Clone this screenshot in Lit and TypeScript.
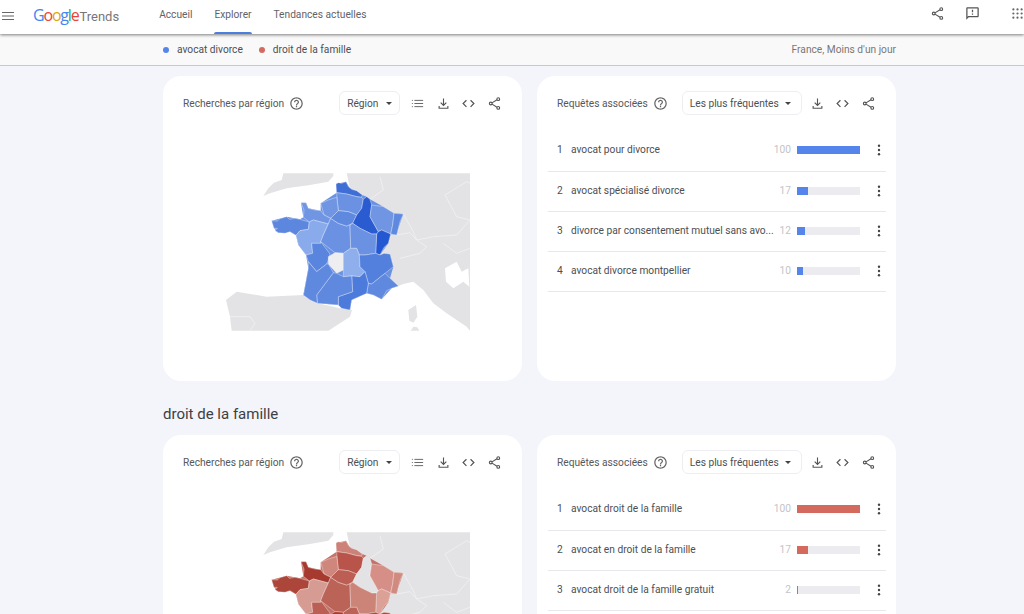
import { LitElement, html, css, svg } from "lit";
import { customElement } from "lit/decorators.js";

// region outlines, traced on a 870x570 canvas (3x the map size)
const REGIONS: Record<string, string> = {
  nord: "408,72 415,68 425,70 438,65 445,80 455,88 470,92 487,105 484,112 470,110 440,102 410,98",
  picardie: "410,98 440,102 470,110 484,112 490,118 485,145 470,165 445,155 415,152 412,125",
  hnormandie: "362,130 385,120 410,112 412,125 415,152 392,175 372,165 368,150",
  bnormandie: "303,128 318,128 325,145 345,150 362,152 372,165 392,175 385,192 340,180 328,186 310,172 312,150",
  bretagne: "215,182 232,183 240,176 260,170 268,178 285,175 300,178 328,186 325,208 300,212 288,226 270,215 255,220 235,218 225,212 232,205 222,205",
  loire: "288,226 300,212 325,208 328,186 340,180 385,192 370,225 362,250 335,250 338,280 318,285 295,255",
  centre: "385,192 392,175 415,190 440,198 458,190 450,195 452,265 430,280 405,278 362,245 370,225",
  idf: "415,152 445,155 470,165 458,190 440,198 415,190 392,175",
  champagne: "458,190 470,165 485,145 490,118 500,110 510,118 515,135 510,170 535,215 530,222 515,222 480,205",
  lorraine: "515,135 550,140 582,160 578,195 572,222 545,210 535,215 510,170",
  alsace: "582,160 610,162 600,185 595,205 590,225 572,222 578,195",
  franche: "527,280 530,222 535,215 545,210 572,222 565,250 552,262 540,285",
  bourgogne: "450,195 458,190 480,205 515,222 530,222 527,280 495,285 478,285 470,265 452,265",
  poitou: "335,250 362,250 362,245 390,282 385,300 380,312 350,335 325,305 318,285 338,280",
  limousin: "385,290 405,278 430,280 430,330 410,340 385,312",
  auvergne: "430,280 452,265 470,265 478,285 480,320 495,335 480,350 455,348 430,350 430,330",
  rhone: "478,285 495,285 527,280 540,285 552,280 570,282 580,320 555,340 515,372 505,370 495,335 480,320",
  paca: "500,400 505,370 515,372 555,340 570,355 595,378 575,385 560,392 545,418 520,405",
  languedoc: "415,410 458,395 455,348 480,350 495,335 505,370 500,400 455,420 450,450 425,445 415,435",
  midi: "352,430 350,405 400,338 410,340 430,350 455,348 458,395 415,410 415,435",
  aquitaine: "310,405 325,325 325,305 350,335 380,312 385,312 400,338 350,405 352,430 330,420",
};

const FRANCE = "408,72 438,65 450,85 487,105 500,110 510,118 550,140 582,160 610,162 595,205 590,225 572,222 565,250 540,285 570,282 580,320 570,355 595,378 575,385 545,418 520,405 500,400 455,420 450,450 425,445 415,435 352,430 310,405 325,325 318,285 295,255 288,226 270,215 235,218 222,205 215,182 260,170 300,178 310,172 303,128 318,128 325,145 362,152 362,130 410,98";

const BLUE_FILLS: Record<string, string> = {
  nord: "#3f6fd6", picardie: "#6b92e2", hnormandie: "#6f95e3", bnormandie: "#6f95e3",
  bretagne: "#5d87df", loire: "#8aabeb", centre: "#6a91e2", idf: "#5f88df",
  champagne: "#2a5bd0", lorraine: "#6f95e3", alsace: "#5f88df", franche: "#2458d2",
  bourgogne: "#6a91e2", poitou: "#5a85de", limousin: "#eeeef0", auvergne: "#8fafec",
  rhone: "#5380dc", paca: "#5f88df", languedoc: "#4d7bdb", midi: "#5f88df", aquitaine: "#5f88df",
};

const RED_FILLS: Record<string, string> = {
  nord: "#cc8278", picardie: "#b8544a", hnormandie: "#cf867d", bnormandie: "#a63a2f",
  bretagne: "#ad463a", loire: "#d69b92", centre: "#bc6358", idf: "#bd5e54",
  champagne: "#e3e3e5", lorraine: "#d58f87", alsace: "#d08a80", franche: "#dba096",
  bourgogne: "#cc8478", poitou: "#bb5f55", limousin: "#a63a2f", auvergne: "#bc6358",
  rhone: "#ad463a", paca: "#bc6358", languedoc: "#ad463a", midi: "#bc6358", aquitaine: "#bc6358",
};

const LAND = [
  "190,108 205,85 222,68 245,60 250,40 400,40 400,48 385,65 330,75 260,85 210,100",
  "440,40 810,40 810,512 800,500 740,460 700,430 670,390 640,365 610,372 595,378 500,300 480,120 450,85",
  "78,420 110,395 200,410 310,405 355,430 420,445 456,450 450,470 385,512 95,512 90,470",
  "625,450 648,435 652,470 640,488 628,482",
  "632,512 640,500 652,502 658,512",
];

const SEA = "735,325 770,305 785,335 805,325 808,380 790,365 760,385 738,365";

const BORDERS = [
  "540,50 550,90 510,118",
  "610,162 640,215 650,240 700,230 770,225 810,180",
  "735,105 800,65 810,70",
  "735,105 770,170 810,180",
  "590,225 630,218 650,240 680,260 660,280 600,295",
  "730,250 770,280 810,265",
  "90,470 150,470 165,490 150,512",
];

interface Query { label: string; value: number }

const BLUE_QUERIES: Query[] = [
  { label: "avocat pour divorce", value: 100 },
  { label: "avocat spécialisé divorce", value: 17 },
  { label: "divorce par consentement mutuel sans avo...", value: 12 },
  { label: "avocat divorce montpellier", value: 10 },
];

const RED_QUERIES: Query[] = [
  { label: "avocat droit de la famille", value: 100 },
  { label: "avocat en droit de la famille", value: 17 },
  { label: "avocat droit de la famille gratuit", value: 2 },
];

const shareIcon = html`<svg class="line-icon" viewBox="0 0 24 24"><path d="M16 6 8 11M8 13l8 5"/><circle cx="18" cy="5" r="2.2"/><circle cx="6" cy="12" r="2.2"/><circle cx="18" cy="19" r="2.2"/></svg>`;
const downloadIcon = html`<svg class="line-icon" viewBox="0 0 24 24"><path d="M12 4v11M7.5 10.5 12 15l4.500-4.500M5 16v3.500h14V16"/></svg>`;
const codeIcon = html`<svg class="fill-icon" viewBox="0 0 24 24"><path d="M9.400 16.600 4.800 12l4.600-4.600L8 6l-6 6 6 6 1.400-1.400zm5.200 0 4.600-4.600-4.600-4.600L16 6l6 6-6 6-1.400-1.400z"/></svg>`;
const listIcon = html`<svg class="line-icon thin" viewBox="0 0 24 24"><path d="M7 7h14M7 12h14M7 17h14M3 7h1.500M3 12h1.500M3 17h1.500"/></svg>`;
const helpIcon = html`<svg class="help-icon" viewBox="0 0 24 24"><path d="M11 18h2v-2h-2v2zm1-16C6.480 2 2 6.480 2 12s4.480 10 10 10 10-4.480 10-10S17.520 2 12 2zm0 18c-4.410 0-8-3.590-8-8s3.590-8 8-8 8 3.590 8 8-3.590 8-8 8zm0-14c-2.210 0-4 1.790-4 4h2c0-1.100.9-2 2-2s2 .9 2 2c0 2-3 1.750-3 5h2c0-2.250 3-2.500 3-5 0-2.210-1.790-4-4-4z"/></svg>`;
const feedbackIcon = html`<svg class="fill-icon" viewBox="0 0 24 24"><path d="M20 2H4c-1.100 0-1.990.9-1.990 2L2 22l4-4h14c1.100 0 2-.9 2-2V4c0-1.100-.9-2-2-2zm0 14H5.170L4 17.170V4h16v12zm-9-4h2v2h-2zm0-6h2v4h-2z"/></svg>`;
const kebabIcon = html`<svg class="kebab" viewBox="0 0 4 14"><circle cx="2" cy="2" r="1.400"/><circle cx="2" cy="7" r="1.400"/><circle cx="2" cy="12" r="1.400"/></svg>`;

@customElement("app-root")
export class AppRoot extends LitElement {
  private _renderMap(fills: Record<string, string>, base: string) {
    return html`
      <svg class="map" viewBox="0 0 870 570">
        ${LAND.map((p) => svg`<polygon points=${p} fill="#e3e3e5"></polygon>`)}
        <polygon points=${SEA} fill="#fff"></polygon>
        ${BORDERS.map((p) => svg`<polyline points=${p} fill="none" stroke="#f1f1f3" stroke-width="2.500"></polyline>`)}
        <polygon points=${FRANCE} fill=${base}></polygon>
        ${Object.keys(REGIONS).map((k) => svg`
          <polygon points=${REGIONS[k]} fill=${fills[k]} stroke="#fff" stroke-opacity="0.6" stroke-width="1.800" stroke-linejoin="round"></polygon>`)}
      </svg>
    `;
  }

  private _renderRow(q: Query, i: number, color: string) {
    return html`
      <div class="row">
        <span class="rank">${i + 1}</span>
        <span class="query">${q.label}</span>
        <span class="value">${q.value}</span>
        <div class="bar"><div class="bar-fill" style="width: ${q.value}%; background: ${color}"></div></div>
        ${kebabIcon}
      </div>
    `;
  }

  private _renderPair(fills: Record<string, string>, base: string, queries: Query[], color: string) {
    return html`
      <div class="pair">
        <section class="card">
          <div class="card-head">
            <span class="card-title">Recherches par région</span>
            ${helpIcon}
            <div class="select region"><span>Région</span><i class="caret"></i></div>
            <div class="tools">${listIcon}${downloadIcon}${codeIcon}${shareIcon}</div>
          </div>
          ${this._renderMap(fills, base)}
        </section>
        <section class="card">
          <div class="card-head">
            <span class="card-title">Requêtes associées</span>
            ${helpIcon}
            <div class="select top"><span>Les plus fréquentes</span><i class="caret"></i></div>
            <div class="tools">${downloadIcon}${codeIcon}${shareIcon}</div>
          </div>
          <div class="rows">${queries.map((q, i) => this._renderRow(q, i, color))}</div>
        </section>
      </div>
    `;
  }

  render() {
    return html`
      <header class="topbar">
        <svg class="burger" viewBox="0 0 12 8"><path d="M0 .5h12M0 4h12M0 7.500h12"/></svg>
        <div class="logo">
          <span class="google"><b class="g-blue">G</b><b class="g-red">o</b><b class="g-yellow">o</b><b class="g-blue">g</b><b class="g-green">l</b><b class="g-red">e</b></span>
          <span class="trends">Trends</span>
        </div>
        <nav class="nav">
          <a>Accueil</a>
          <a class="active">Explorer</a>
          <a>Tendances actuelles</a>
        </nav>
        <div class="top-actions">
          <span class="act share">${shareIcon}</span>
          <span class="act feedback">${feedbackIcon}</span>
          <svg class="apps" viewBox="0 0 12 12">
            ${[1.5, 6, 10.5].flatMap((y) => [1.5, 6, 10.5].map((x) => svg`<circle cx=${x} cy=${y} r="1.200"></circle>`))}
          </svg>
        </div>
      </header>
      <div class="subbar">
        <div class="legend">
          <span class="dot blue"></span><span class="term">avocat divorce</span>
          <span class="dot red"></span><span class="term">droit de la famille</span>
        </div>
        <span class="scope">France, Moins d'un jour</span>
      </div>
      <main class="content">
        ${this._renderPair(BLUE_FILLS, "#6a91e2", BLUE_QUERIES, "#5585ea")}
        <h2 class="term-title">droit de la famille</h2>
        ${this._renderPair(RED_FILLS, "#c4736a", RED_QUERIES, "#d46a5e")}
      </main>
    `;
  }

  static styles = css`
    :host {
      display: block;
      height: 614px;
      overflow: hidden;
      background: #f4f4fb;
      font-family: Roboto, "Liberation Sans", sans-serif;
      font-size: 10.2px;
      color: #5f6368;
    }

    .topbar {
      position: relative;
      z-index: 1;
      display: flex;
      align-items: center;
      height: 34px;
      padding-left: 2px;
      background: #fff;
      box-shadow: 0 1px 3px rgba(0, 0, 0, 0.5);
    }

    .burger {
      width: 12px;
      height: 8px;
      margin-top: -3px;
      stroke: #666;
      stroke-width: 1.1;
    }

    .logo {
      display: flex;
      align-items: baseline;
      gap: 1px;
      margin-left: 19px;
      margin-top: -4px;
    }

    .google {
      font-family: "Open Sans", sans-serif;
      font-size: 16px;
      letter-spacing: -1.2px;
    }

    .google b {
      font-weight: 400;
    }

    .g-blue { color: #4285f4; }
    .g-red { color: #ea4335; }
    .g-yellow { color: #e0a800; }
    .g-green { color: #34a853; }

    .trends {
      font-size: 13px;
      color: #777;
    }

    .nav {
      display: flex;
      gap: 22px;
      height: 34px;
      margin-left: 40px;
    }

    .nav a {
      position: relative;
      padding-top: 9px;
      color: #5f6368;
    }

    .nav a.active::after {
      content: "";
      position: absolute;
      left: 0;
      right: 0;
      bottom: 0;
      height: 2px;
      border-radius: 2px 2px 0 0;
      background: #4a7fe0;
    }

    .top-actions {
      display: flex;
      align-items: center;
      margin-left: auto;
      margin-top: -8px;
    }

    .act {
      display: flex;
    }

    .act svg {
      width: 15px;
      height: 15px;
    }

    .act.share {
      margin-right: 20px;
    }

    .apps {
      width: 11px;
      height: 11px;
      margin: 0 1px 0 32px;
      fill: #666;
    }

    .subbar {
      display: flex;
      align-items: center;
      justify-content: space-between;
      height: 32px;
      padding: 0 128px 0 163px;
      background: #faf9fa;
      border-bottom: 1px solid #c9c9cc;
      box-sizing: border-box;
    }

    .legend {
      display: flex;
      align-items: center;
      color: #4c4f53;
    }

    .dot {
      width: 6px;
      height: 6px;
      border-radius: 50%;
    }

    .dot.blue { background: #5585ea; }
    .dot.red { background: #d46a5e; margin-left: 16px; }

    .term {
      margin-left: 8px;
    }

    .scope {
      color: #777;
    }

    .content {
      padding: 10px 0 0 163px;
      width: 733px;
    }

    .pair {
      display: grid;
      grid-template-columns: 359px 359px;
      gap: 15px;
    }

    .card {
      height: 305px;
      border-radius: 18px;
      background: #fff;
      overflow: hidden;
    }

    .card-head {
      display: flex;
      align-items: center;
      height: 54px;
      padding-left: 20px;
    }

    .card-title {
      color: #55585c;
    }

    .help-icon {
      width: 15px;
      height: 15px;
      margin-left: 5px;
      fill: #666;
    }

    .select {
      display: flex;
      align-items: center;
      justify-content: space-between;
      box-sizing: border-box;
      height: 24px;
      padding: 0 7px;
      border: 1px solid #eeeef2;
      border-radius: 6px;
      color: #4c4f53;
    }

    .select.region {
      width: 61px;
      margin: 0 2px 0 35px;
    }

    .select.top {
      width: 120px;
      margin-left: 14px;
      padding-right: 10px;
    }

    .caret {
      width: 0;
      height: 0;
      border: 3px solid transparent;
      border-top: 3.5px solid #444;
      border-bottom: 0;
    }

    .tools {
      display: flex;
      align-items: center;
      gap: 10.5px;
      margin-left: 8px;
    }

    .tools svg {
      width: 15px;
      height: 15px;
    }

    .line-icon {
      fill: none;
      stroke: #555;
      stroke-width: 1.8;
    }

    .line-icon.thin {
      stroke-width: 1.4;
    }

    .fill-icon {
      fill: #555;
    }

    .map {
      display: block;
      width: 290px;
      height: 190px;
      margin: 30px 0 0 37px;
    }

    .rows {
      margin: 0 10px 0 11px;
    }

    .row {
      display: flex;
      align-items: center;
      box-sizing: border-box;
      height: 40px;
      padding: 0 0 2px 9px;
      border-bottom: 1px solid #e8e8ec;
      color: #4c4f53;
    }

    .row:first-child {
      height: 42px;
    }

    .rank {
      flex: none;
      width: 14px;
    }

    .query {
      flex: none;
      width: 200px;
      white-space: nowrap;
    }

    .value {
      flex: none;
      width: 20px;
      text-align: right;
      color: #c4c4c8;
    }

    .bar {
      flex: none;
      width: 63px;
      height: 8px;
      margin-left: 6px;
      background: #ececf0;
    }

    .bar-fill {
      height: 100%;
    }

    .kebab {
      flex: none;
      width: 4px;
      height: 12px;
      margin-left: 17px;
      fill: #444;
    }

    .term-title {
      margin: 24px 0 12px;
      font-size: 15px;
      line-height: 18px;
      font-weight: 400;
      color: #3c4043;
    }
  `;
}
